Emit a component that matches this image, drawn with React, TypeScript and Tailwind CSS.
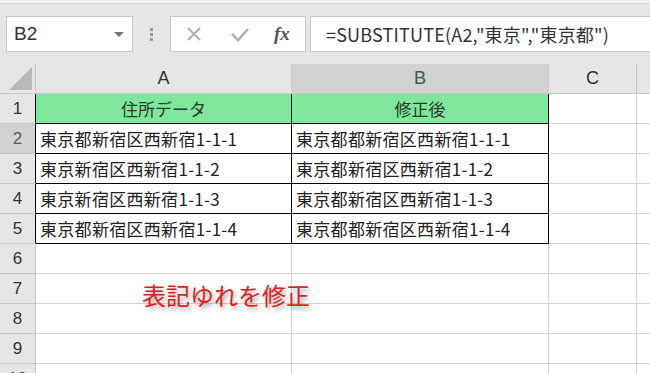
import React from "react";

const jp = { fontFamily: '"Noto Sans CJK JP", "Noto Sans", sans-serif' };
const latin = { fontFamily: '"Liberation Sans", Arial, sans-serif' };

const rows = [
  ["東京都新宿区西新宿1-1-1", "東京都都新宿区西新宿1-1-1"],
  ["東京新宿区西新宿1-1-2", "東京都新宿区西新宿1-1-2"],
  ["東京新宿区西新宿1-1-3", "東京都新宿区西新宿1-1-3"],
  ["東京都新宿区西新宿1-1-4", "東京都都新宿区西新宿1-1-4"],
];

const Toolbar = () => (
  <div className="h-[64px] bg-[#e6e6e6] flex flex-col">
    <div className="h-[4px] bg-[#f1f1f1] border-b border-[#d4d4d4]" />
    <div className="flex items-start pt-[12px] pl-[6px]">
      <div className="w-[127px] h-[36px] bg-white border border-[#c6c6c6] flex items-center justify-between pl-[7px] pr-[8px]">
        <span className="text-[19px] text-[#333]" style={latin}>B2</span>
        <span className="w-0 h-0 border-l-[5px] border-r-[5px] border-t-[5px] border-l-transparent border-r-transparent border-t-[#777]" />
      </div>
      <div className="w-[37px] h-[36px] flex flex-col items-center justify-center gap-[2px]">
        <span className="w-[3px] h-[3px] bg-[#999]" />
        <span className="w-[3px] h-[3px] bg-[#999]" />
        <span className="w-[3px] h-[3px] bg-[#999]" />
      </div>
      <div className="w-[136px] h-[36px] bg-white border border-[#c6c6c6] flex items-center">
        <svg width="16" height="16" viewBox="0 0 16 16" className="ml-[15px]">
          <path d="M2 2 L14 14 M14 2 L2 14" stroke="#b0b0b0" strokeWidth="2" fill="none" />
        </svg>
        <svg width="20" height="16" viewBox="0 0 20 16" className="ml-[28px]">
          <path d="M2 8 L8 14 L18 3" stroke="#b0b0b0" strokeWidth="2.6" fill="none" />
        </svg>
        <span className="ml-[24px] text-[19px] italic font-bold text-[#555]" style={{ fontFamily: '"Liberation Serif", "DejaVu Serif", serif' }}>
          fx
        </span>
      </div>
      <div className="ml-[4px] flex-1 h-[36px] bg-white border border-r-0 border-[#c6c6c6] flex items-center pl-[15px]">
        <span className="text-[18px] text-[#333] tracking-[0.2px]" style={jp}>
          =SUBSTITUTE(A2,"東京","東京都")
        </span>
      </div>
    </div>
  </div>
);

const ColHeader = ({ label, w, sel }: { label: string; w: string; sel?: boolean }) => (
  <div
    className={`${w} h-full shrink-0 border-r border-b border-[#c8c8c8] flex items-center justify-center text-[18px] ${
      sel ? "bg-[#d2d2d2] text-[#3d5c45]" : "text-[#333]"
    }`}
    style={latin}
  >
    {label}
  </div>
);

export default function App() {
  const empty = [6, 7, 8, 9, 10];
  return (
    <div className="w-[650px] h-[373px] overflow-hidden bg-white relative">
      <Toolbar />
      <div className="h-[30px] flex bg-[#e6e6e6]">
        <div className="w-[36px] h-full shrink-0 border-r border-b border-[#c8c8c8] relative flex items-end justify-end pr-[3px] pb-[3px]">
          <svg width="23" height="23" viewBox="0 0 23 23">
            <path d="M23 0 L23 23 L0 23 Z" fill="#b9b9b9" />
          </svg>
        </div>
        <ColHeader label="A" w="w-[256px]" />
        <ColHeader label="B" w="w-[257px]" sel />
        <ColHeader label="C" w="w-[88px]" />
        <div className="flex-1 h-full border-b border-[#c8c8c8]" />
      </div>

      {/* row 1 */}
      <div className="h-[30px] flex">
        <div className="w-[36px] shrink-0 bg-[#e6e6e6] border-r border-b border-r-black border-b-[#c8c8c8] flex items-center justify-center text-[17px] text-[#333]" style={latin}>
          1
        </div>
        <div className="w-[256px] shrink-0 bg-[#7fe79b] border-r border-b border-black flex items-center justify-center text-[17px] text-[#2a3a2e]" style={jp}>
          住所データ
        </div>
        <div className="w-[257px] shrink-0 bg-[#7fe79b] border-r border-b border-black flex items-center justify-center text-[17px] text-[#2a3a2e]" style={jp}>
          修正後
        </div>
        <div className="w-[88px] shrink-0 border-r border-b border-[#d4d4d4]" />
        <div className="flex-1 border-b border-[#d4d4d4]" />
      </div>

      {rows.map((r, i) => (
        <div key={i} className="h-[30px] flex">
          <div
            className={`w-[36px] shrink-0 border-r border-b border-r-black border-b-[#c8c8c8] flex items-center justify-center text-[17px] ${
              i === 0 ? "bg-[#d2d2d2] text-[#4a6652]" : "bg-[#e6e6e6] text-[#333]"
            }`}
            style={latin}
          >
            {i + 2}
          </div>
          <div className="w-[256px] shrink-0 border-r border-b border-black flex items-center pl-[4px] text-[17px] text-[#222] tracking-[0.3px]" style={jp}>
            {r[0]}
          </div>
          <div className="w-[257px] shrink-0 border-r border-b border-black flex items-center pl-[4px] text-[17px] text-[#222] tracking-[0.3px]" style={jp}>
            {r[1]}
          </div>
          <div className="w-[88px] shrink-0 border-r border-b border-[#d4d4d4]" />
          <div className="flex-1 border-b border-[#d4d4d4]" />
        </div>
      ))}

      {empty.map((n) => (
        <div key={n} className="h-[30px] flex">
          <div className="w-[36px] shrink-0 bg-[#e6e6e6] border-r border-b border-[#c8c8c8] flex items-center justify-center text-[17px] text-[#333]" style={latin}>
            {n}
          </div>
          <div className="w-[256px] shrink-0 border-r border-b border-[#d4d4d4]" />
          <div className="w-[257px] shrink-0 border-r border-b border-[#d4d4d4]" />
          <div className="w-[88px] shrink-0 border-r border-b border-[#d4d4d4]" />
          <div className="flex-1 border-b border-[#d4d4d4]" />
        </div>
      ))}

      <div
        className="absolute left-[142px] top-[283px] text-[24px] leading-none text-[#e51d23]"
        style={{ ...jp, textShadow: "2px 3px 4px rgba(0,0,0,0.35)" }}
      >
        表記ゆれを修正
      </div>
    </div>
  );
}
